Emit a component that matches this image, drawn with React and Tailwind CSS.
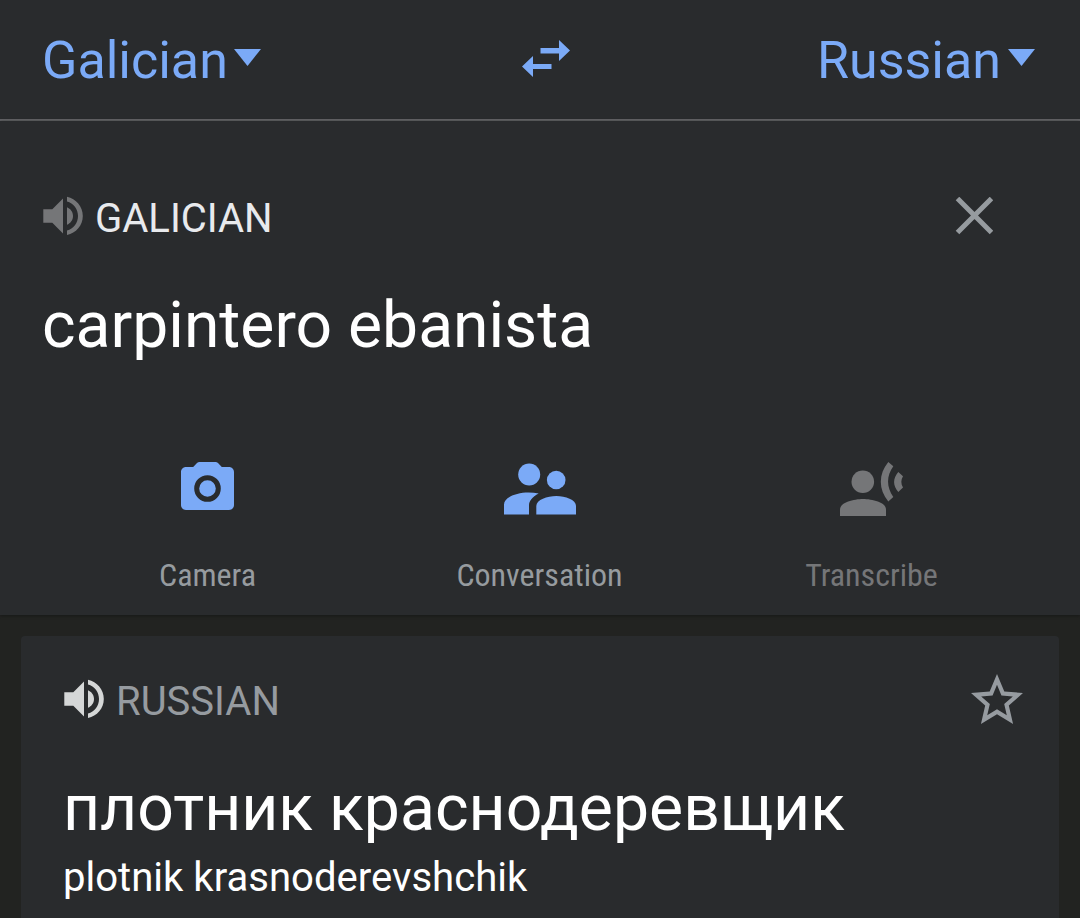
import React from 'react';

function Caret() {
  return (
    <svg className="mb-[7px] block h-[17px] w-[27px]" viewBox="0 0 27 17" fill="currentColor">
      <path d="M0 0h27L13.5 17z" />
    </svg>
  );
}

function SwapIcon() {
  return (
    <svg className="block h-[37px] w-12" viewBox="0 0 48 37" fill="currentColor">
      <path d="M18.5 8H37V0l11 10.5L37 21v-7.5H18.5zM29.5 24H11v-8L0 26.5 11 37v-8h18.500z" />
    </svg>
  );
}

function SpeakerIcon() {
  return (
    <svg className="block h-10 w-10" viewBox="0 0 40 40" fill="currentColor">
      <path d="M.3 13.300v13.500h9l10.700 10.700V2.500L9.300 13.300zM24 11.300v17.500c3.500-1.500 6-4.700 6-8.800s-2.500-7.200-6-8.700zM24 .8v4.700c6.500 1.800 11 7.600 11 14.500s-4.500 12.700-11 14.500V39.100c9-2 15.800-9.700 15.800-19.100S33 2.800 24 .8z" />
    </svg>
  );
}

function CloseIcon() {
  return (
    <svg className="block h-[38px] w-[38px]" viewBox="0 0 38 38" fill="none" stroke="currentColor" strokeWidth="5">
      <path d="M2.500 1.500l34 34M36.500 1.500l-34 34" />
    </svg>
  );
}

function StarIcon() {
  return (
    <svg className="block h-[50px] w-[52px]" viewBox="2 2 20 19" fill="currentColor" preserveAspectRatio="none">
      <path d="M22 9.240l-7.190-.62L12 2 9.190 8.630 2 9.240l5.460 4.730L5.820 21 12 17.270 18.180 21l-1.630-7.030L22 9.240zM12 15.400l-3.760 2.270 1-4.280-3.320-2.880 4.380-.38L12 6.100l1.710 4.040 4.380.38-3.320 2.880 1 4.280L12 15.400z" />
    </svg>
  );
}

function CameraIcon() {
  return (
    <svg className="block h-12 w-[53px]" viewBox="0 0 53 48">
      <path
        fill="currentColor"
        d="M18.500 0h16c1 0 1.800.4 2.500 1.100L40.800 5H48c2.800 0 5 2.200 5 5v33c0 2.800-2.200 5-5 5H5c-2.800 0-5-2.200-5-5V10c0-2.800 2.200-5 5-5h7.200L16 1.100C16.700.4 17.500 0 18.500 0z"
      />
      <circle cx="26.500" cy="26.500" r="10.800" fill="none" stroke="#292b2d" strokeWidth="5" />
    </svg>
  );
}

function ConversationIcon() {
  return (
    <svg className="block h-[53px] w-[72px]" viewBox="0 -1.5 72 53" fill="currentColor">
      <circle cx="25.200" cy="11" r="11" />
      <circle cx="52.200" cy="16.500" r="9.300" />
      <path d="M0 51V41C0 33.500 13 29 24.500 29c3.500 0 7 .3 10.200 1C28 33.500 25 37.500 25 42v9z" />
      <path d="M32.300 51v-8.500c0-6.300 11-10 20-10s19.700 3.700 19.700 10V51z" />
    </svg>
  );
}

function TranscribeIcon() {
  return (
    <svg className="block h-[54px] w-[63px]" viewBox="0 0 63 54" fill="currentColor">
      <circle cx="22.800" cy="19.800" r="11.300" />
      <path d="M0 54v-6.500C0 40.300 14 37 23 37s23 3.300 23 10.500V54z" />
      <path d="M48.300 0l5 4.200c-7 9.500-7 20.800 0 30.800l-5 4.500c-10-12-10-27.500 0-39.500z" />
      <path d="M58.300 10l4.700 4.200c-2.200 3.700-2.200 7.500 0 11.300L58.300 30c-5.600-6.500-5.600-13.500 0-20z" />
    </svg>
  );
}

const actions = [
  { label: 'Camera', Icon: CameraIcon, icon: 'text-[#7baaf7]', text: 'text-[#969b9f]' },
  { label: 'Conversation', Icon: ConversationIcon, icon: 'text-[#7baaf7]', text: 'text-[#969b9f]' },
  { label: 'Transcribe', Icon: TranscribeIcon, icon: 'text-[#757678]', text: 'text-[#757678]' },
];

function App() {
  return (
    <div className="flex h-[918px] w-[1080px] flex-col overflow-hidden bg-[#222321] font-['Roboto',sans-serif]">
      <header className="flex h-[121px] shrink-0 items-start justify-between border-b-2 border-[#626366] bg-[#292b2d] pr-[45px] pl-[42px] text-[52px] leading-[60px] text-[#7baaf7]">
        <button className="flex w-[300px] items-center gap-1.5 pt-[31px]">
          <span>Galician</span>
          <Caret />
        </button>
        <button className="pt-10 pl-[14px]">
          <SwapIcon />
        </button>
        <button className="flex w-[300px] items-center justify-end gap-[7px] pt-[31px]">
          <span>Russian</span>
          <Caret />
        </button>
      </header>

      <section className="flex h-[494px] shrink-0 flex-col bg-[#292b2d] shadow-[0_1px_3px_#171817]">
        <div className="mt-[68px] flex h-[54px] items-center justify-between pr-[87px] pl-[43px]">
          <div className="flex items-center gap-3 text-[#757678]">
            <SpeakerIcon />
            <span className="pt-[5px] text-[40px] leading-[49px] text-[#e8eaed]">GALICIAN</span>
          </div>
          <button className="text-[#969b9f]">
            <CloseIcon />
          </button>
        </div>
        <p className="mt-11 pl-[42px] text-[64.2px] leading-[76px] text-white">carpintero ebanista</p>
        <div className="mt-[99px] flex justify-center pr-px">
          {actions.map(({ label, Icon, icon, text }) => (
            <button key={label} className="flex w-[332px] flex-col items-center">
              <span className={`flex h-[54px] items-start ${icon}`}>
                <Icon />
              </span>
              <span className={`mt-10 font-['Roboto_Condensed','Roboto',sans-serif] text-[32px] leading-[38px] font-stretch-75% ${text}`}>
                {label}
              </span>
            </button>
          ))}
        </div>
      </section>

      <section className="mx-[21px] mt-[21px] h-[282px] shrink-0 rounded-t bg-[#292b2d] pt-9 pr-9 pl-[43px]">
        <div className="flex h-[54px] items-center justify-between">
          <div className="flex items-center gap-3 text-[#d5d7d7]">
            <SpeakerIcon />
            <span className="pt-[5px] text-[40px] leading-[49px] text-[#969ba0]">RUSSIAN</span>
          </div>
          <button className="text-[#969ba0]">
            <StarIcon />
          </button>
        </div>
        <p className="mt-11 -ml-px text-[64.3px] leading-[76px] text-white">плотник краснодеревщик</p>
        <p className="mt-2 -ml-px text-[40.1px] leading-[48px] text-white">plotnik krasnoderevshchik</p>
      </section>
    </div>
  );
}

export default App;
